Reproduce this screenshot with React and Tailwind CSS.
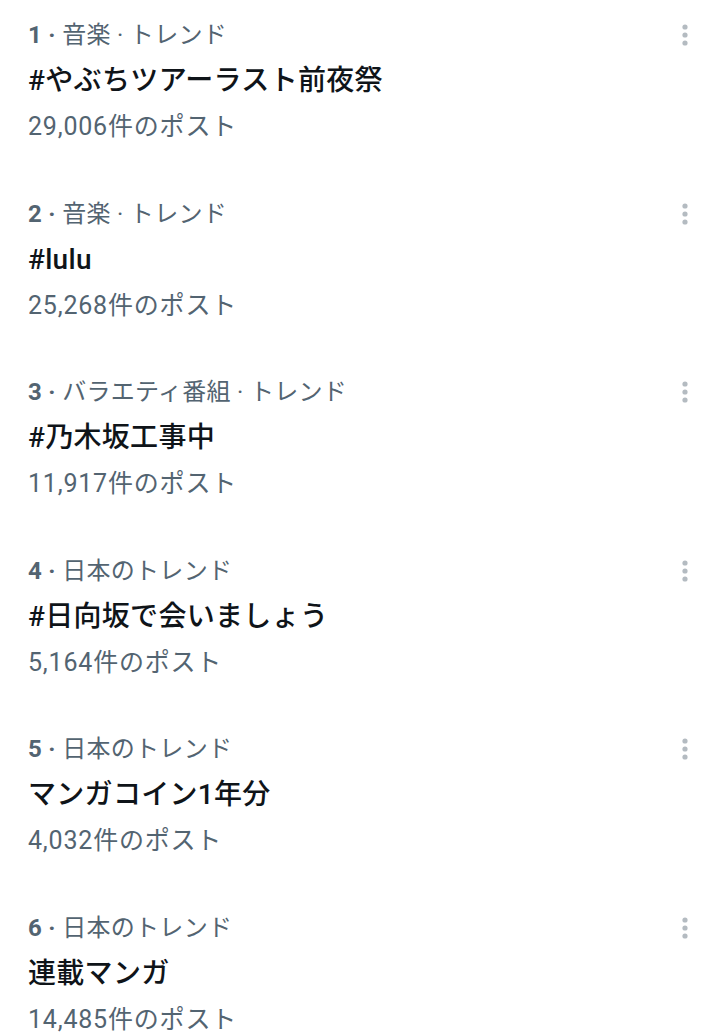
import React from "react";

// Trend list data
const trends = [
  { rank: 1, category: "音楽 · トレンド", title: "#やぶちツアーラスト前夜祭", count: "29,006" },
  { rank: 2, category: "音楽 · トレンド", title: "#lulu", count: "25,268" },
  { rank: 3, category: "バラエティ番組 · トレンド", title: "#乃木坂工事中", count: "11,917" },
  { rank: 4, category: "日本のトレンド", title: "#日向坂で会いましょう", count: "5,164" },
  { rank: 5, category: "日本のトレンド", title: "マンガコイン1年分", count: "4,032" },
  { rank: 6, category: "日本のトレンド", title: "連載マンガ", count: "14,485" },
];

const font = { fontFamily: '"Roboto", "Noto Sans CJK JP", sans-serif' };

const MoreIcon = () => (
  <svg width="10" height="24" viewBox="0 0 10 24" className="fill-[#b4bbc1]">
    <circle cx="5" cy="4" r="2.6" />
    <circle cx="5" cy="12" r="2.6" />
    <circle cx="5" cy="20" r="2.6" />
  </svg>
);

const TrendItem = ({ trend }) => (
  <div className="flex pl-[28px] pr-[30px] pt-[12px] pb-[28.6px]">
    <div className="flex-1">
      <div className="text-[24px] leading-[46px] text-[#536471] tracking-[0.3px]">
        <span className="font-bold">{trend.rank} ·</span> {trend.category}
      </div>
      <div className="text-[28px] leading-[46px] font-medium text-[#0f1419] tracking-[0.3px]">{trend.title}</div>
      <div className="text-[25px] leading-[46px] text-[#536471] tracking-[0.8px]">{trend.count}件のポスト</div>
    </div>
    <div className="pt-[11px]">
      <MoreIcon />
    </div>
  </div>
);

const App = () => {
  return (
    <div className="w-[720px] h-[1032px] overflow-hidden bg-white" style={font}>
      {trends.map((t) => (
        <TrendItem key={t.rank} trend={t} />
      ))}
    </div>
  );
};

export default App;
